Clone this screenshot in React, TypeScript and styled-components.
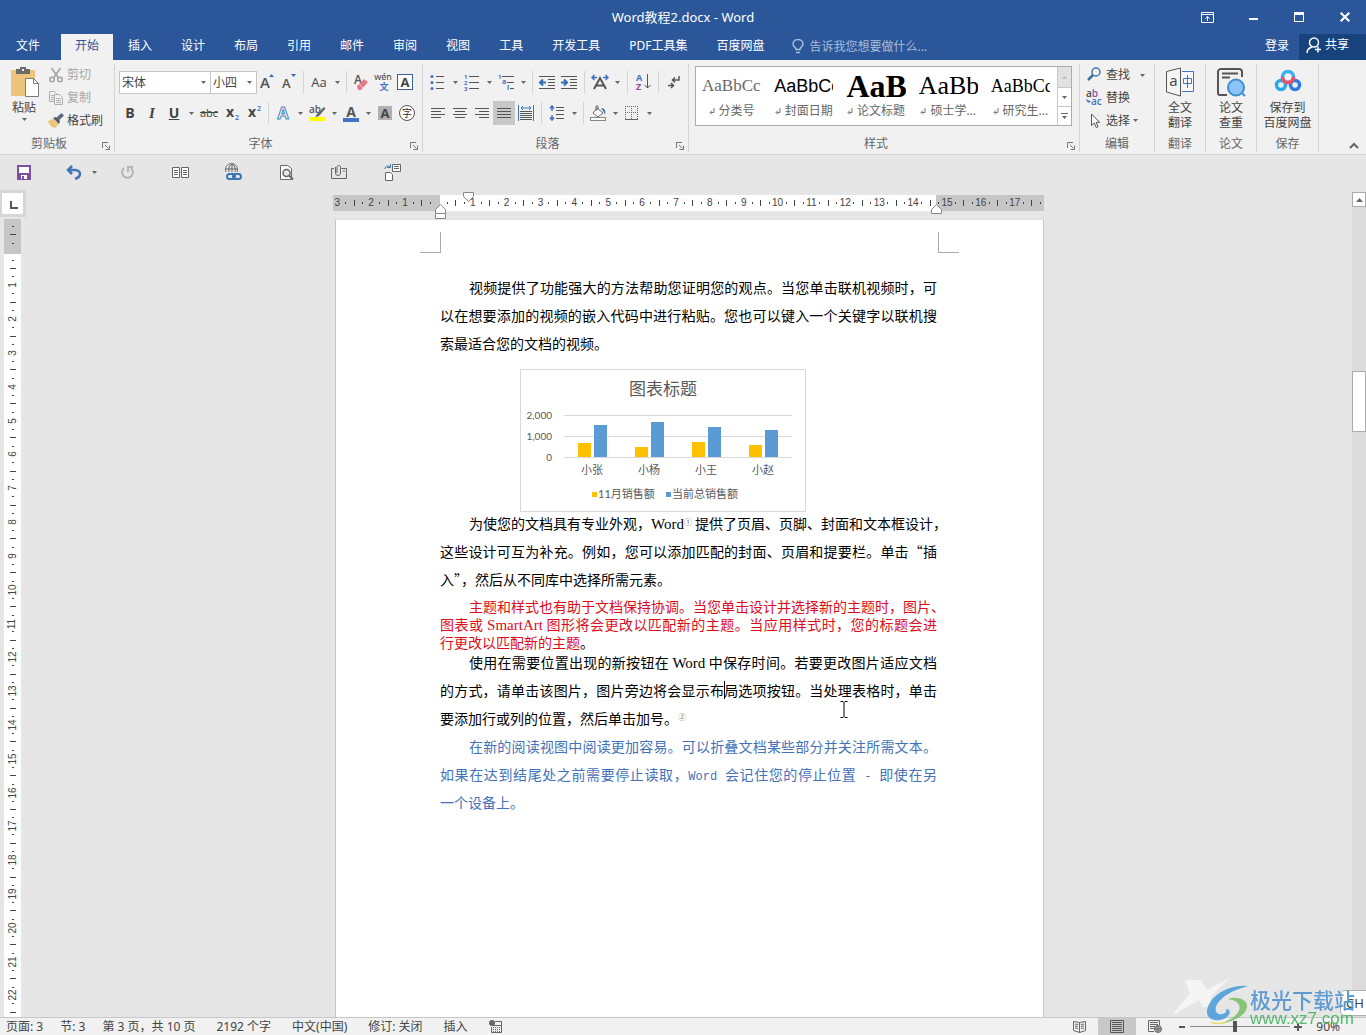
import React from "react";
import styled, { createGlobalStyle, css } from "styled-components";

const UI_FONT = `"Noto Sans", "Noto Sans CJK SC", sans-serif`;
const DOC_FONT = `"Noto Sans CJK SC", sans-serif`;
const LATIN_SERIF = `"Liberation Serif", "Noto Sans CJK SC", serif`;

const color = {
  brand: "#2b579a",
  brandDark: "#17427c",
  ribbon: "#f1f1f1",
  canvas: "#e6e6e6",
  line: "#d2d2d2",
  ink: "#444444",
  soft: "#666666",
  muted: "#a6a6a6",
  blue: "#2e6db4",
  blueInk: "#4472c4",
};

const GlobalStyle = createGlobalStyle`
  * { box-sizing: border-box; }
  html, body { margin: 0; height: 100%; overflow: hidden; }
  body { font: 12px/16px ${UI_FONT}; color: ${color.ink}; background: ${color.canvas}; }
  button, input, select { font: inherit; color: inherit; margin: 0; }
`;

const Window = styled.div`
  display: flex;
  flex-direction: column;
  height: 100vh;
  overflow: hidden;
  background: ${color.canvas};
`;

/* ---------- header ---------- */

const Header = styled.header`
  background: ${color.brand};
  color: #fff;
`;

const TitleRow = styled.div`
  display: grid;
  grid-template-columns: 1fr auto 1fr;
  align-items: center;
  height: 34px;
`;

const DocTitle = styled.h1`
  grid-column: 2;
  margin: 0;
  font-size: 13px;
  font-weight: 400;
  line-height: 34px;
`;

const WindowButtons = styled.div`
  display: flex;
  justify-content: flex-end;
  margin-right: -2px;
`;

const plainButton = css`
  display: flex;
  align-items: center;
  justify-content: center;
  padding: 0;
  border: 0;
  background: transparent;
  cursor: default;
`;

const WindowButton = styled.button`
  ${plainButton}
  width: 46px;
  height: 32px;
`;

const TabRow = styled.nav`
  display: flex;
  height: 26px;
  gap: 1px;
`;

const FileButton = styled.button`
  ${plainButton}
  justify-content: flex-start;
  width: 60px;
  padding-left: 16px;
  line-height: 24px;
  padding-bottom: 2px;
`;

const Tab = styled.button<{ $active?: boolean }>`
  ${plainButton}
  padding: 0 14px 2px;
  white-space: nowrap;
  background: ${(p) => (p.$active ? color.ribbon : "transparent")};
  color: ${(p) => (p.$active ? color.brand : "#fff")};
`;

const TellMe = styled.label`
  display: flex;
  align-items: center;
  gap: 5px;
  flex: 1;
  padding: 0 0 1px 13px;
`;

const TellMeInput = styled.input`
  width: 160px;
  border: 0;
  padding: 0;
  outline: 0;
  background: transparent;
  &::placeholder { color: #a9bddb; opacity: 1; }
`;

const SignIn = styled.button`
  ${plainButton}
  padding: 0 9px 2px;
`;

const Share = styled.button`
  ${plainButton}
  gap: 3px;
  width: 67px;
  padding: 0 10px 4px 0;
  background: ${color.brandDark};
`;

/* ---------- ribbon ---------- */

const Ribbon = styled.section`
  display: flex;
  height: 95px;
  padding: 4px 0 2px;
  border-bottom: 1px solid ${color.line};
  background: ${color.ribbon};
`;

const Group = styled.div<{ $width?: number }>`
  display: flex;
  flex-direction: column;
  flex: ${(p) => (p.$width ? `0 0 ${p.$width}px` : "1 1 0")};
  min-width: 0;
  border-right: 1px solid #d4d4d4;
`;

const GroupBody = styled.div<{ $pad?: string }>`
  display: flex;
  flex: 1;
  min-height: 0;
  padding: ${(p) => p.$pad ?? "0"};
`;

const GroupFooter = styled.div`
  display: flex;
  align-items: center;
  height: 16px;
  color: ${color.soft};
`;

const GroupLabel = styled.span`
  flex: 1;
  text-align: center;
`;

const Launcher = styled.button`
  ${plainButton}
  width: 16px;
  height: 16px;
  padding-top: 4px;
`;

const Rows = styled.div`
  display: flex;
  flex-direction: column;
  gap: 7px;
  padding-top: 6px;
`;

const ToolRow = styled.div`
  display: flex;
  align-items: center;
  height: 24px;
`;

const Tool = styled.button<{ $on?: boolean; $w?: number }>`
  ${plainButton}
  width: ${(p) => p.$w ?? 22}px;
  height: 24px;
  background: ${(p) => (p.$on ? "#c8c8c8" : "transparent")};
`;

const CaretButton = styled.button`
  ${plainButton}
  width: 12px;
  height: 22px;
`;

const Separator = styled.span<{ $wide?: boolean }>`
  width: 1px;
  height: 22px;
  margin: 0 ${(p) => (p.$wide ? 4 : 3)}px;
  background: #d4d4d4;
`;

const Combo = styled.div<{ $w: number }>`
  display: grid;
  align-items: center;
  width: ${(p) => p.$w}px;
  height: 23px;
  margin-right: -1px;
  border: 1px solid #c6c6c6;
  background: #fff;
  > * { grid-area: 1 / 1; }
  > svg { justify-self: end; margin-right: 4px; pointer-events: none; }
`;

const ComboSelect = styled.select`
  appearance: none;
  width: 100%;
  height: 21px;
  padding: 1px 0 0 2px;
  border: 0;
  outline: 0;
  background: transparent;
`;

const Glyph = styled.span<{ $bold?: boolean; $italic?: boolean; $under?: boolean; $strike?: boolean; $serif?: boolean; $size?: number }>`
  font-family: ${(p) => (p.$serif ? `"Liberation Serif", serif` : `"Open Sans", sans-serif`)};
  font-size: ${(p) => p.$size ?? 14}px;
  font-weight: ${(p) => (p.$bold ? 700 : 400)};
  font-style: ${(p) => (p.$italic ? "italic" : "normal")};
  text-decoration: ${(p) => (p.$under ? "underline" : p.$strike ? "line-through" : "none")};
  line-height: 16px;
`;

const Paste = styled.button`
  ${plainButton}
  flex-direction: column;
  justify-content: flex-start;
  width: 48px;
  padding-top: 3px;
  line-height: 20px;
`;

const CommandColumn = styled.div`
  display: flex;
  flex-direction: column;
`;

const CommandRow = styled.div`
  display: flex;
  align-items: center;
  gap: 6px;
`;

const Command = styled.button<{ $off?: boolean }>`
  ${plainButton}
  justify-content: flex-start;
  gap: 3px;
  height: 23px;
  padding-bottom: 2px;
  color: ${(p) => (p.$off ? color.muted : color.ink)};
`;

const BigCommand = styled.button`
  ${plainButton}
  flex: 1;
  flex-direction: column;
  justify-content: flex-start;
  gap: 3px;
  padding-top: 3px;
  line-height: 15px;
  white-space: pre-line;
`;

const Gallery = styled.div`
  display: flex;
  flex: 1;
  min-width: 0;
  height: 60px;
  border: 1px solid #ababab;
  background: #fff;
`;

const StyleItem = styled.button`
  ${plainButton}
  flex: 1 1 0;
  flex-direction: column;
  align-items: stretch;
  justify-content: flex-start;
  min-width: 0;
  padding: 0 7px 0 6px;
`;

const Sample = styled.span<{ $font: string; $size: number; $bold?: boolean; $light?: boolean }>`
  overflow: hidden;
  height: 36px;
  text-align: left;
  white-space: nowrap;
  font: ${(p) => (p.$bold ? 700 : 400)} ${(p) => p.$size}px/38px ${(p) => p.$font};
  color: ${(p) => (p.$light ? "#6a6a6a" : "#000")};
`;

const SampleName = styled.span`
  display: flex;
  align-items: center;
  justify-content: center;
  gap: 4px;
  line-height: 16px;
  white-space: nowrap;
  color: ${color.soft};
`;

const GalleryScroll = styled.div`
  display: grid;
  grid-template-rows: 21px 19px 1fr;
  width: 14px;
  border-left: 1px solid #c6c6c6;
`;

const GalleryButton = styled.button<{ $off?: boolean }>`
  ${plainButton}
  border-bottom: 1px solid #c6c6c6;
  background: ${(p) => (p.$off ? "#e1e1e1" : "#fff")};
  &:last-child { border-bottom: 0; }
`;

const Collapse = styled.button`
  ${plainButton}
  flex: 0 0 47px;
  align-items: flex-end;
  justify-content: flex-end;
  padding: 0 7px 3px 0;
`;

/* ---------- quick access ---------- */

const QuickBar = styled.div`
  display: flex;
  height: 35px;
`;

const QuickButton = styled.button<{ $w?: number }>`
  ${plainButton}
  width: ${(p) => p.$w ?? 53}px;
  height: 34px;
`;

const QuickSplit = styled.div`
  display: flex;
  align-items: center;
  width: 53px;
  padding-left: 12px;
`;

/* ---------- workspace ---------- */

const Workspace = styled.div`
  display: flex;
  flex: 1;
  min-height: 0;
`;

const LeftGutter = styled.div`
  display: flex;
  flex-direction: column;
  width: 27px;
`;

const TabStop = styled.button`
  ${plainButton}
  align-items: flex-end;
  width: 26px;
  height: 27px;
  padding: 0 0 5px 2px;
  border: 3px solid #d6d6d6;
  border-left-width: 2px;
  background: #fff;
`;

const VerticalRuler = styled.div`
  display: flex;
  flex-direction: column;
  flex: 1;
  width: 17px;
  min-height: 0;
  margin: 2px 0 0 4px;
  padding-top: 3px;
  background: linear-gradient(#c6c6c6 35px, #fff 35px);
`;

const HorizontalRuler = styled.div`
  position: relative;
  display: flex;
  height: 16px;
  margin: 5px 0 8px -2px;
  background: linear-gradient(90deg, #c6c6c6 107px, #fff 107px, #fff 603px, #c6c6c6 603px);
`;

const Mark = styled.span<{ $vertical?: boolean }>`
  display: flex;
  align-items: center;
  justify-content: center;
  flex: 1 1 0;
  min-width: 0;
  min-height: 0;
  font: 10px/10px "Liberation Sans", sans-serif;
  color: #444;
  > span {
    flex: none;
    transform: ${(p) => (p.$vertical ? "rotate(-90deg)" : "none")};
  }
`;

const Tick = styled.i<{ $long?: boolean; $vertical?: boolean }>`
  width: ${(p) => (p.$vertical ? (p.$long ? 6 : 2) : 1)}px;
  height: ${(p) => (p.$vertical ? 1 : p.$long ? 6 : 2)}px;
  background: #444;
`;

const IndentMarker = styled.svg<{ $x: number; $y: number }>`
  position: absolute;
  left: ${(p) => p.$x}px;
  top: ${(p) => p.$y}px;
  overflow: visible;
`;

const Canvas = styled.main`
  display: flex;
  flex: 1;
  justify-content: center;
  min-width: 0;
  min-height: 0;
  overflow: hidden;
`;

const Sheet = styled.div`
  display: flex;
  flex-direction: column;
  width: 709px;
`;

const Page = styled.article`
  position: relative;
  flex: 1;
  min-height: 0;
  padding: 12px 106px 0 104px;
  border: 1px solid #c6c6c6;
  border-width: 1px 1px 0;
  border-top-color: #e0e0e0;
  background: #fff;
  color: #000;
  font: 400 14px/28px ${DOC_FONT};
`;

const CropRow = styled.div`
  display: flex;
  justify-content: space-between;
  margin: 0 -22px 20px -20px;
`;

const Crop = styled.span<{ $side: "left" | "right" }>`
  width: 21px;
  height: 21px;
  border: 0 solid #ababab;
  border-bottom-width: 1px;
  ${(p) => (p.$side === "left" ? "border-right-width: 1px;" : "border-left-width: 1px;")}
`;

const Paragraph = styled.p<{ $tone?: string; $tight?: boolean }>`
  margin: ${(p) => (p.$tight ? "4px 0 -3px" : "0")};
  line-height: ${(p) => (p.$tight ? 18 : 28)}px;
  color: ${(p) => p.$tone ?? "#000"};
`;

const Line = styled.span<{ $indent?: boolean; $last?: boolean }>`
  display: block;
  padding-left: ${(p) => (p.$indent ? 29 : 0)}px;
  white-space: nowrap;
  text-align: justify;
  text-align-last: ${(p) => (p.$last ? "left" : "justify")};
`;

const Latin = styled.span<{ $mono?: boolean }>`
  font-family: ${(p) => (p.$mono ? `"Liberation Mono", monospace` : LATIN_SERIF)};
  font-size: ${(p) => (p.$mono ? 12 : 15)}px;
  line-height: 14px;
`;

const NoteMark = styled.a`
  font-size: 8px;
  line-height: 8px;
  vertical-align: 4px;
  text-decoration: none;
  color: #777;
`;

const Caret = styled.span`
  position: relative;
  &::after {
    content: "";
    position: absolute;
    left: 0;
    top: 1px;
    width: 1px;
    height: 18px;
    background: #000;
  }
`;

const Black = styled.span`
  color: #000;
`;

const PointerIcon = styled.svg`
  position: absolute;
  left: 504px;
  top: 481px;
`;

const ChartFrame = styled.figure`
  width: 286px;
  height: 143px;
  margin: 12px 0 -3px 80px;
  border: 1px solid #d9d9d9;
  line-height: 0;
`;

const ScrollBar = styled.div`
  display: flex;
  flex-direction: column;
  width: 14px;
  padding-top: 2px;
`;

const ScrollButton = styled.button`
  ${plainButton}
  height: 15px;
  border: 1px solid #ababab;
  background: #fff;
`;

const ScrollTrack = styled.div`
  flex: 1;
  padding-top: 164px;
  background: #dcdcdc;
`;

const ScrollThumb = styled.div`
  height: 61px;
  border: 1px solid #ababab;
  background: #fff;
`;

/* ---------- status bar ---------- */

const StatusBar = styled.footer`
  display: flex;
  align-items: center;
  height: 18px;
  padding-left: 6px;
  border-top: 1px solid #c6c6c6;
  background: ${color.ribbon};
  line-height: 17px;
  white-space: nowrap;
`;

const StatusItems = styled.div`
  display: flex;
  flex: 1;
  align-items: center;
  gap: 17px;
  > :nth-child(n + 4) { margin-left: 4px; }
`;

const ViewButton = styled.button<{ $on?: boolean }>`
  ${plainButton}
  width: 38px;
  height: 17px;
  background: ${(p) => (p.$on ? "#c8c8c8" : "transparent")};
`;

const ZoomButton = styled.button`
  ${plainButton}
  width: 16px;
  height: 17px;
`;

const ZoomSlider = styled.input`
  appearance: none;
  width: 100px;
  height: 12px;
  outline: 0;
  background: linear-gradient(#8a8a8a, #8a8a8a) center / 100% 1px no-repeat;
  &::-webkit-slider-thumb {
    appearance: none;
    width: 4px;
    height: 11px;
    background: #555;
  }
`;

const ZoomValue = styled.button`
  ${plainButton}
  width: 60px;
  padding: 0 26px 0 0;
  justify-content: flex-end;
`;

/* ---------- overlay ---------- */

const Overlay = styled.div`
  position: fixed;
  right: 0;
  bottom: 0;
  display: flex;
  align-items: flex-end;
  height: 60px;
  pointer-events: none;
`;

const ImeBadge = styled.div`
  position: fixed;
  right: -6px;
  bottom: 19px;
  width: 32px;
  height: 26px;
  padding-left: 5px;
  border: 1px solid #b0b0b0;
  border-radius: 5px;
  background: #fff;
  font-size: 13px;
  line-height: 25px;
`;

const SiteMark = styled.div`
  display: flex;
  flex-direction: column;
  margin: 0 11px 9px 0;
`;

const SiteName = styled.span`
  font: 500 21px/26px "Noto Sans CJK SC", sans-serif;
  color: #5f9bd3;
`;

const SiteUrl = styled.span`
  font: 400 17px/14px "Liberation Sans", sans-serif;
  color: #55b86d;
`;

/* ---------- icons ---------- */

const CaretIcon = ({ fill = "#666" }: { fill?: string }) => (
  <svg width="5" height="3" viewBox="0 0 5 3"><path d="M0 0h5L2.500 3z" fill={fill} /></svg>
);

const Drop = ({ label }: { label: string }) => (
  <CaretButton aria-label={label}><CaretIcon /></CaretButton>
);

type LineSpec = [number, number, number];
const LinesIcon = ({ rows, w = 16, h = 16, children }: { rows: LineSpec[]; w?: number; h?: number; children?: React.ReactNode }) => (
  <svg width={w} height={h} viewBox={`0 0 ${w} ${h}`} fill="none" overflow="visible">
    {rows.map(([x, y, len], i) => <rect key={i} x={x} y={y} width={len} height="1" fill="#555" />)}
    {children}
  </svg>
);

const LauncherIcon = () => (
  <svg width="8" height="8" viewBox="0 0 8 8" fill="none" stroke="#777">
    <path d="M.5 6V.5H6M3 3l3.500 3.500M7.500 3.500v4h-4" />
  </svg>
);

const PasteIcon = () => (
  <svg width="30" height="31" viewBox="0 0 30 31">
    <rect x="2" y="3" width="24" height="26" rx="1" fill="#ecc57c" />
    <path d="M7 2h4V0h6v2h4v5H7z" fill="#6b6b6b" />
    <rect x="13" y="2" width="2" height="2" fill="#f1f1f1" />
    <path d="M16.500 11.500h8l5 5v13h-13z" fill="#fff" stroke="#7b7b7b" />
    <path d="M24.500 11.500v5h5" fill="none" stroke="#7b7b7b" />
  </svg>
);

const CutIcon = () => (
  <svg width="16" height="16" viewBox="0 0 16 16" fill="none" stroke="#a3a3a3" strokeWidth="1.500">
    <path d="M3.500 1l7 10M12.500 1l-7 10" />
    <circle cx="4" cy="12.500" r="2.300" /><circle cx="12" cy="12.500" r="2.300" />
  </svg>
);

const CopyIcon = () => (
  <svg width="16" height="16" viewBox="0 0 16 16" fill="#f1f1f1" stroke="#b0b0b0">
    <path d="M1.500 1.500h5l2 2v8h-7zM3 5.500h4M3 7.500h4M3 9.500h3" />
    <path d="M6.500 4.500h5l3 3v7h-8zM8 8.500h5M8 10.500h5M8 12.500h5" />
  </svg>
);

const BrushIcon = () => (
  <svg width="16" height="16" viewBox="0 0 16 16">
    <path d="M0 8l5-2 6 5-4 4c-3 0-6-3-7-7z" fill="#ecc57c" />
    <path d="M5 5l3-1 4 4-1 3z" fill="#555" />
    <path d="M8.500 4.500L13.500 0 16 2.500l-5 5z" fill="#5a6b80" />
  </svg>
);

const GrowIcon = ({ up }: { up?: boolean }) => (
  <svg width="16" height="18" viewBox="0 0 16 18" overflow="visible">
    <text x="1" y="15" fontFamily="Open Sans" fontSize={up ? 15 : 13} fontWeight="600" fill="#555">A</text>
    <path d={up ? "M10 4l2.500-3L15 4z" : "M10 1h5l-2.500 3z"} fill={color.blue} />
  </svg>
);

const EraserIcon = () => (
  <svg width="16" height="17" viewBox="0 0 16 17" overflow="visible">
    <text x="1" y="10" fontFamily="Open Sans" fontSize="12" fontWeight="600" fill="#555">A</text>
    <path d="M4 12l7-7 4 3-7 8-3 0z" fill="#e8798a" />
    <path d="M6 10l4 4" stroke="#f7c3cb" />
  </svg>
);

const PinyinIcon = () => (
  <svg width="18" height="18" viewBox="0 0 18 18" overflow="visible">
    <text x="9" y="7" textAnchor="middle" fontFamily="Noto Sans" fontSize="9" fill="#444">wén</text>
    <text x="10" y="17" textAnchor="middle" fontFamily="Noto Sans CJK SC" fontSize="9" fontWeight="700" fill={color.blueInk}>文</text>
  </svg>
);

const BoxedA = () => (
  <svg width="16" height="16" viewBox="0 0 16 16" overflow="visible">
    <rect x=".5" y=".5" width="15" height="15" fill="#fff" stroke="#3c5f96" />
    <text x="8" y="13" textAnchor="middle" fontFamily="Open Sans" fontSize="13" fontWeight="700" fill="#444">A</text>
  </svg>
);

const ShadedA = () => (
  <svg width="14" height="14" viewBox="0 0 14 14" overflow="visible">
    <rect width="14" height="14" fill="#b0b0b0" />
    <text x="7" y="12" textAnchor="middle" fontFamily="Open Sans" fontSize="13" fontWeight="700" fill="#444">A</text>
  </svg>
);

const CircledChar = () => (
  <svg width="16" height="16" viewBox="0 0 16 16" overflow="visible">
    <circle cx="8" cy="8" r="7.500" fill="#fff" stroke="#555" />
    <text x="8" y="12" textAnchor="middle" fontFamily="Noto Sans CJK SC" fontSize="10" fill="#333">字</text>
  </svg>
);

const OutlineA = () => (
  <svg width="16" height="16" viewBox="0 0 16 16" overflow="visible">
    <text x="8" y="14" textAnchor="middle" fontFamily="Open Sans" fontSize="16" fontWeight="700" fill="#fff" stroke="#4a86c8">A</text>
  </svg>
);

const HighlightIcon = () => (
  <svg width="17" height="17" viewBox="0 0 17 17" overflow="visible">
    <text x="0" y="8" fontFamily="Open Sans" fontSize="10" fontWeight="600" fill="#555">ab</text>
    <path d="M15 2l1.500 1.500L10 11l-4 1.500L8 9z" fill="#666" />
    <rect y="12" width="16" height="4" fill="#ffff00" />
  </svg>
);

const FontColorIcon = () => (
  <svg width="16" height="17" viewBox="0 0 16 17" overflow="visible">
    <text x="8" y="12" textAnchor="middle" fontFamily="Open Sans" fontSize="14" fontWeight="700" fill="#555">A</text>
    <rect y="13" width="16" height="4" fill={color.blueInk} />
  </svg>
);

const ScriptIcon = ({ sup }: { sup?: boolean }) => (
  <svg width="15" height="16" viewBox="0 0 15 16" overflow="visible">
    <text x="1" y="12" fontFamily="Open Sans" fontSize="14" fontWeight="700" fill="#444">x</text>
    <text x="10" y={sup ? 6 : 15} fontFamily="Open Sans" fontSize="7" fontWeight="600" fill={color.blue}>2</text>
  </svg>
);

const BulletIcon = () => (
  <LinesIcon rows={[[6, 2, 8], [6, 8, 8], [6, 14, 8]]}>
    {[2, 8, 14].map((y) => <circle key={y} cx="2" cy={y + 0.5} r="1.500" fill={color.blueInk} />)}
  </LinesIcon>
);

const NumberIcon = () => (
  <LinesIcon rows={[[5, 2, 10], [5, 8, 10], [5, 14, 10]]}>
    {[1, 2, 3].map((n) => (
      <text key={n} x="0" y={n * 6 - 1} fontFamily="Open Sans" fontSize="6" fontWeight="700" fill={color.blueInk}>{n}</text>
    ))}
  </LinesIcon>
);

const MultiIcon = () => (
  <LinesIcon rows={[[4, 2, 12], [9, 8, 7], [12, 14, 4]]}>
    <text x="0" y="5" fontFamily="Open Sans" fontSize="6" fontWeight="700" fill={color.blueInk}>1</text>
    <text x="4" y="10" fontFamily="Open Sans" fontSize="7" fontWeight="700" fill={color.blueInk}>a</text>
    <text x="9" y="16" fontFamily="Open Sans" fontSize="7" fontWeight="700" fill={color.blueInk}>i</text>
  </LinesIcon>
);

const IndentIcon = ({ out }: { out?: boolean }) => (
  <LinesIcon h={14} rows={[[0, 1, 16], [9, 4, 7], [9, 7, 7], [9, 10, 7], [0, 13, 16]]}>
    <path d={out ? "M7 7.500H1M4 4.500l-3 3 3 3" : "M0 7.500h6M3 4.500l3 3-3 3"} stroke={color.blue} strokeWidth="2" />
  </LinesIcon>
);

const AsianLayoutIcon = () => (
  <svg width="18" height="16" viewBox="0 0 18 16" fill="none">
    <path d="M6 3.500H1M3.500 1L1 3.500 3.500 6M12 3.500h5M14.500 1L17 3.500 14.500 6" stroke={color.blueInk} strokeWidth="1.500" />
    <path d="M3 15L9 4l6 11M5 11.500h8" stroke="#555" strokeWidth="2" />
  </svg>
);

const SortIcon = () => (
  <svg width="15" height="18" viewBox="0 0 15 18" fill="none" overflow="visible">
    <text x="0" y="8" fontFamily="Open Sans" fontSize="9" fontWeight="700" fill={color.blueInk}>A</text>
    <text x="0" y="17" fontFamily="Open Sans" fontSize="9" fontWeight="700" fill="#8c4fa8">Z</text>
    <path d="M11.500 1v14M8.500 12l3 3 3-3" stroke="#555" />
  </svg>
);

const ParagraphMarks = () => (
  <svg width="12" height="14" viewBox="0 0 12 14" fill="none" stroke="#555" strokeWidth="1.500">
    <path d="M11 1v4H5M7 2.500L4.500 5 7 7.500M0 10.500h5M3 8l2.500 2.500L3 13" />
  </svg>
);

const DistributeIcon = () => (
  <LinesIcon rows={[[2, 6, 12], [2, 8, 12], [2, 10, 12], [2, 12, 12], [2, 14, 12]]}>
    <path d="M.5 0v16M15.500 0v16M3 3h10M5 1L3 3l2 2M11 1l2 2-2 2" stroke={color.blueInk} />
  </LinesIcon>
);

const SpacingIcon = () => (
  <LinesIcon rows={[[7, 2, 8], [7, 5, 8], [7, 9, 8], [7, 13, 8]]}>
    <path d="M3 1v5M1 3.500L3 1l2 2.500M3 15v-5M1 12.500L3 15l2-2.500" stroke={color.blueInk} strokeWidth="1.500" />
  </LinesIcon>
);

const BucketIcon = () => (
  <svg width="17" height="16" viewBox="0 0 17 16" fill="none">
    <path d="M7 3l6 5-5 4-5-4z" fill="#fff" stroke="#666" />
    <path d="M6 6V1h2v4" stroke="#666" />
    <path d="M11 3c4 0 5 3 4 7-1-3-2-4-4-7z" fill="#3f79a8" />
    <rect x=".5" y="12.500" width="15" height="3" fill="#fff" stroke="#888" />
  </svg>
);

const BordersIcon = () => (
  <svg width="14" height="14" viewBox="0 0 14 14" fill="none" stroke="#666">
    <path d="M.5 0v13M6.500 0v13M12.500 0v13M0 .5h13M0 6.500h13" strokeDasharray="1 1" />
    <path d="M0 13.500h13" />
  </svg>
);

const ReturnMark = () => (
  <svg width="6" height="7" viewBox="0 0 6 7" fill="none" stroke="#777"><path d="M5 0v4.500H1.500M3 2.500l-2 2 2 2" /></svg>
);

const FindIcon = () => (
  <svg width="17" height="15" viewBox="-1 0 17 15" fill="none">
    <circle cx="9" cy="5" r="4" fill="#fff" stroke="#3f6ea8" strokeWidth="1.500" />
    <path d="M6 8l-5 5" stroke="#3f6ea8" strokeWidth="2.500" />
  </svg>
);

const ReplaceIcon = () => (
  <svg width="17" height="17" viewBox="0 0 17 17" overflow="visible">
    <text x="0" y="8" fontFamily="Open Sans" fontSize="10" fontWeight="600" fill="#444">a<tspan fill="#8c4fa8">b</tspan></text>
    <text x="5" y="16" fontFamily="Open Sans" fontSize="10" fontWeight="600" fill={color.blueInk}>ac</text>
    <path d="M1 10v2.500h3M2.500 11L4 12.500 2.500 14" fill="none" stroke={color.blueInk} />
  </svg>
);

const ArrowIcon = () => (
  <svg width="17" height="16" viewBox="-1 0 17 16">
    <path d="M4.500 1v11.500l2.800-2.500 2 4.500 1.800-.8-2-4.400h3.500z" fill="#fff" stroke="#555" />
  </svg>
);

const TranslateIcon = () => (
  <svg width="30" height="30" viewBox="0 0 30 30" fill="none">
    <path d="M17 4.500h11.500v20H17" fill="#f6f8fc" stroke={color.blueInk} />
    <path d="M1.500 4.500L15.500 1v28l-14-4z" fill="#f5f5f5" stroke="#555" />
    <text x="8.500" y="19" textAnchor="middle" fontFamily="Open Sans" fontSize="15" fill="#444">a</text>
    <path d="M18.500 11.500h8v5h-8zM22.500 8v13" stroke={color.blueInk} />
  </svg>
);

const PaperCheckIcon = () => (
  <svg width="30" height="30" viewBox="0 0 30 30" fill="none" stroke="#555" strokeWidth="2">
    <path d="M11 28H4a2 2 0 0 1-2-2V4a3 3 0 0 1 3-2h18a3 3 0 0 1 3 3v5M6 6.500h16M6 10.500h8" />
    <circle cx="20" cy="20.500" r="8" fill="#8cc4f7" stroke="#3d8fd0" />
    <path d="M26 26l3 3" stroke="#3d8fd0" />
  </svg>
);

const CloudDiskIcon = () => (
  <svg width="28" height="30" viewBox="0 0 28 30" fill="none">
    <circle cx="7" cy="18" r="4.500" stroke="#27a9e8" strokeWidth="3.500" />
    <circle cx="21" cy="18" r="4.500" stroke="#2f7de0" strokeWidth="3.500" />
    <circle cx="14" cy="10" r="5.500" stroke="#3bb0ee" strokeWidth="3.500" />
    <path d="M8.500 10a5.500 5.500 0 0 0 11 0" stroke="#ef4f6b" strokeWidth="3.500" />
  </svg>
);

const SaveIcon = () => (
  <svg width="14" height="15" viewBox="0 0 14 15" fill="none">
    <path d="M1 1h12v13H1z" fill="#fff" stroke="#7b50a0" strokeWidth="2" />
    <path d="M1 8h12v6H1z" fill="#7b50a0" /><path d="M4 10h6v4H4z" fill="#fff" /><path d="M5 11h2v3H5z" fill="#7b50a0" />
  </svg>
);

const UndoIcon = () => (
  <svg width="16" height="15" viewBox="0 0 16 15" fill="none" stroke="#3f74b5" strokeWidth="2.500">
    <path d="M6 1L2 5l4 4M2 5h7c3 0 5 2 5 4s-2 4.500-5 4.500" />
  </svg>
);

const RedoIcon = () => (
  <svg width="15" height="15" viewBox="0 0 15 15" fill="none" stroke="#b5b5b5" strokeWidth="2">
    <path d="M4 3a5.500 5.500 0 1 0 7 0M8 7V2h5" />
  </svg>
);

const ReadIcon = () => (
  <svg width="17" height="13" viewBox="0 0 17 13" fill="#fff" stroke="#666">
    <path d="M.5 1.500h7v10h-7zM9.500 1.500h7v10h-7z" />
    <path d="M2 4.500h4M2 6.500h4M2 8.500h4M11 4.500h4M11 6.500h4M11 8.500h4" />
  </svg>
);

const LinkGlobeIcon = () => (
  <svg width="17" height="18" viewBox="0 0 17 18" fill="none" stroke="#666">
    <path d="M1 9a6 6 0 1 1 11 0M7 1v8M1 6h12M4 9c-1-4 1-7 3-8 2 1 4 4 3 8" />
    <rect x="2" y="11" width="8" height="5" rx="2.500" stroke="#3f74b5" strokeWidth="2" />
    <rect x="8" y="11" width="8" height="5" rx="2.500" stroke="#3f74b5" strokeWidth="2" />
  </svg>
);

const PreviewIcon = () => (
  <svg width="15" height="17" viewBox="0 0 15 17" fill="none" stroke="#666">
    <path d="M1.500 1.500h7l4 3v11h-11z" fill="#fff" />
    <circle cx="7.500" cy="9" r="3.500" fill="#e6e6e6" strokeWidth="1.500" /><path d="M10 11.500l4 4" strokeWidth="2" />
  </svg>
);

const AttachIcon = () => (
  <svg width="17" height="16" viewBox="0 0 17 16" fill="none" stroke="#666">
    <path d="M3 4.500H.5v10h15v-10h-5M12 7h2" />
    <path d="M4.500 3v6a2.500 2.500 0 0 0 5 0V2.500a2 2 0 0 0-3.500 0V9" />
  </svg>
);

const MergeIcon = () => (
  <svg width="17" height="17" viewBox="0 0 17 17" fill="none" stroke="#666">
    <path d="M8.500.5h8v7h-8zM10 2.500h5M10 4.500h5" fill="#fff" />
    <path d="M1.500 8.500h5l2 2v6h-7z" fill="#fff" />
    <path d="M1 5c0-3 3-4 5-2M6.500 0v3.500H3" stroke="#3f74b5" />
  </svg>
);

const IndentShape = ({ x, y, kind, label }: { x: number; y: number; kind: "first" | "left" | "right"; label: string }) => {
  const shapes = {
    first: "M.5.5h10v4l-5 5-5-5z",
    left: "M.5 9.500v-4l5-5 5 5v9H.5zM.5 9.500h10",
    right: "M.5 9.500v-4l5-5 5 5v4z",
  };
  return (
    <IndentMarker $x={x} $y={y} width="11" height="15" role="img" aria-label={label}>
      <path d={shapes[kind]} fill="#fff" stroke="#888" />
    </IndentMarker>
  );
};

/* ---------- rulers ---------- */

const Marks = ({ from, count, vertical }: { from: number; count: number; vertical?: boolean }) => (
  <>
    {Array.from({ length: count }, (_, i) => {
      const quarter = from + i;
      const part = ((quarter % 4) + 4) % 4;
      const n = Math.abs(quarter / 4);
      return (
        <Mark key={i} $vertical={vertical}>
          {part === 0 ? (n > 0 && <span>{n}</span>) : <Tick $vertical={vertical} $long={part === 2} />}
        </Mark>
      );
    })}
  </>
);

/* ---------- chart ---------- */

const sales = [
  { name: "小张", month: 680, total: 1500 },
  { name: "小杨", month: 480, total: 1680 },
  { name: "小王", month: 730, total: 1440 },
  { name: "小赵", month: 580, total: 1300 },
];

const SalesChart = () => {
  const base = 87;
  const scale = (v: number) => Math.round((v * 42) / 2000);
  return (
    <ChartFrame>
      <svg width="284" height="141" viewBox="0 0 284 141" fontFamily="Lato, 'Noto Sans CJK SC', sans-serif" fill="#595959">
        <text x="142" y="25" textAnchor="middle" fontSize="17">图表标题</text>
        {[2000, 1000, 0].map((v) => (
          <g key={v}>
            <rect x="43" y={base - scale(v)} width="228" height="1" fill="#d9d9d9" />
            <text x="31" y={base - scale(v) + 4} textAnchor="end" fontSize="10">{v.toLocaleString("en-US")}</text>
          </g>
        ))}
        {sales.map((s, i) => {
          const x = 57 + i * 57;
          return (
            <g key={s.name}>
              <rect x={x} y={base - scale(s.month)} width="13" height={scale(s.month)} fill="#ffc000" />
              <rect x={x + 16} y={base - scale(s.total)} width="13" height={scale(s.total)} fill="#5b9bd5" />
              <text x={x + 14} y="104" textAnchor="middle" fontSize="11">{s.name}</text>
            </g>
          );
        })}
        <rect x="71" y="122" width="5" height="5" fill="#ffc000" />
        <text x="77" y="128" fontSize="11">11月销售额</text>
        <rect x="145" y="122" width="5" height="5" fill="#5b9bd5" />
        <text x="151" y="128" fontSize="11">当前总销售额</text>
      </svg>
    </ChartFrame>
  );
};

/* ---------- data ---------- */

const tabs = ["开始", "插入", "设计", "布局", "引用", "邮件", "审阅", "视图", "工具", "开发工具", "PDF工具集", "百度网盘"];

const styleItems = [
  { name: "分类号", font: LATIN_SERIF, size: 17, light: true },
  { name: "封面日期", font: `"Liberation Sans", sans-serif`, size: 18 },
  { name: "论文标题", font: LATIN_SERIF, size: 32, bold: true },
  { name: "硕士学...", font: LATIN_SERIF, size: 26 },
  { name: "研究生...", font: LATIN_SERIF, size: 18 },
];

const Footer = ({ name, launcher }: { name: string; launcher?: boolean }) => (
  <GroupFooter>
    <GroupLabel>{name}</GroupLabel>
    {launcher && <Launcher aria-label={`${name}设置`}><LauncherIcon /></Launcher>}
  </GroupFooter>
);

export default function App() {
  return (
    <Window lang="zh-CN">
      <GlobalStyle />
      <Header>
        <TitleRow>
          <DocTitle>Word教程2.docx - Word</DocTitle>
          <WindowButtons>
            <WindowButton aria-label="功能区显示选项">
              <svg width="13" height="11" viewBox="0 0 13 11" fill="none" stroke="#fff"><path d="M.5.5h12v10H.5zM0 2.500h13M6.500 9V4.500M4.500 6.500l2-2 2 2" /></svg>
            </WindowButton>
            <WindowButton aria-label="最小化">
              <svg width="9" height="11" viewBox="0 0 9 11"><path d="M0 6h9v2H0z" fill="#fff" /></svg>
            </WindowButton>
            <WindowButton aria-label="最大化">
              <svg width="10" height="10" viewBox="0 0 10 10"><path d="M0 0h10v10H0zM1 3v6h8V3z" fill="#fff" fillRule="evenodd" /></svg>
            </WindowButton>
            <WindowButton aria-label="关闭">
              <svg width="10" height="10" viewBox="0 0 10 10" stroke="#fff" strokeWidth="2"><path d="M.7.7l8.600 8.600M9.300.7L.7 9.300" /></svg>
            </WindowButton>
          </WindowButtons>
        </TitleRow>
        <TabRow>
          <FileButton>文件</FileButton>
          {tabs.map((t, i) => <Tab key={t} $active={i === 0}>{t}</Tab>)}
          <TellMe>
            <svg width="12" height="15" viewBox="0 0 12 15" fill="none" stroke="#a9bddb" strokeWidth="1.500">
              <path d="M4 10.500c0-2-3-3-3-5.500a5 4.500 0 0 1 10 0c0 2.500-3 3.500-3 5.500zM4 13.500h4" />
            </svg>
            <TellMeInput aria-label="告诉我您想要做什么" placeholder="告诉我您想要做什么..." />
          </TellMe>
          <SignIn>登录</SignIn>
          <Share>
            <svg width="16" height="17" viewBox="0 0 16 17" fill="none" stroke="#fff" strokeWidth="1.500">
              <circle cx="8" cy="5.500" r="4.500" /><path d="M1 16c0-3.500 2-5 5-6M9 12.500h6M12 9.500v6" />
            </svg>
            共享
          </Share>
        </TabRow>
      </Header>

      <Ribbon>
        <Group $width={115}>
          <GroupBody>
            <Paste><PasteIcon />粘贴<CaretIcon /></Paste>
            <CommandColumn>
              <Command $off><CutIcon />剪切</Command>
              <Command $off><CopyIcon />复制</Command>
              <Command><BrushIcon />格式刷</Command>
            </CommandColumn>
          </GroupBody>
          <Footer name="剪贴板" launcher />
        </Group>

        <Group $width={308}>
          <GroupBody $pad="0 0 0 4px">
            <Rows>
              <ToolRow>
                <Combo $w={92}><ComboSelect aria-label="字体"><option>宋体</option></ComboSelect><CaretIcon /></Combo>
                <Combo $w={47}><ComboSelect aria-label="字号"><option>小四</option></ComboSelect><CaretIcon /></Combo>
                <Tool aria-label="增大字号"><GrowIcon up /></Tool>
                <Tool aria-label="减小字号"><GrowIcon /></Tool>
                <Separator />
                <Tool $w={24} aria-label="更改大小写"><Glyph $size={13}>Aa</Glyph></Tool>
                <Drop label="大小写选项" />
                <Separator />
                <Tool aria-label="清除格式"><EraserIcon /></Tool>
                <Tool aria-label="拼音指南"><PinyinIcon /></Tool>
                <Tool aria-label="字符边框"><BoxedA /></Tool>
              </ToolRow>
              <ToolRow>
                <Tool aria-label="加粗"><Glyph $bold>B</Glyph></Tool>
                <Tool aria-label="倾斜"><Glyph $italic $bold $serif $size={15}>I</Glyph></Tool>
                <Tool aria-label="下划线"><Glyph $under $bold>U</Glyph></Tool>
                <Drop label="下划线选项" />
                <Tool $w={24} aria-label="删除线"><Glyph $strike $size={11}>abc</Glyph></Tool>
                <Tool aria-label="下标"><ScriptIcon /></Tool>
                <Tool aria-label="上标"><ScriptIcon sup /></Tool>
                <Separator />
                <Tool aria-label="文本效果"><OutlineA /></Tool>
                <Drop label="文本效果选项" />
                <Tool aria-label="突出显示"><HighlightIcon /></Tool>
                <Drop label="突出显示颜色" />
                <Tool aria-label="字体颜色"><FontColorIcon /></Tool>
                <Drop label="字体颜色选项" />
                <Tool aria-label="字符底纹"><ShadedA /></Tool>
                <Tool aria-label="带圈字符"><CircledChar /></Tool>
              </ToolRow>
            </Rows>
          </GroupBody>
          <Footer name="字体" launcher />
        </Group>

        <Group $width={266}>
          <GroupBody $pad="0 0 0 4px">
            <Rows>
              <ToolRow>
                <Tool aria-label="项目符号"><BulletIcon /></Tool>
                <Drop label="项目符号选项" />
                <Tool aria-label="编号"><NumberIcon /></Tool>
                <Drop label="编号选项" />
                <Tool aria-label="多级列表"><MultiIcon /></Tool>
                <Drop label="多级列表选项" />
                <Separator />
                <Tool aria-label="减少缩进量"><IndentIcon out /></Tool>
                <Tool aria-label="增加缩进量"><IndentIcon /></Tool>
                <Separator $wide />
                <Tool aria-label="中文版式"><AsianLayoutIcon /></Tool>
                <Drop label="中文版式选项" />
                <Separator $wide />
                <Tool aria-label="排序"><SortIcon /></Tool>
                <Separator $wide />
                <Tool aria-label="显示编辑标记"><ParagraphMarks /></Tool>
              </ToolRow>
              <ToolRow>
                <Tool aria-label="左对齐"><LinesIcon w={14} h={12} rows={[[0, 1, 14], [0, 4, 10], [0, 7, 14], [0, 10, 10]]} /></Tool>
                <Tool aria-label="居中"><LinesIcon w={14} h={12} rows={[[0, 1, 14], [2, 4, 10], [0, 7, 14], [2, 10, 10]]} /></Tool>
                <Tool aria-label="右对齐"><LinesIcon w={14} h={12} rows={[[0, 1, 14], [4, 4, 10], [0, 7, 14], [4, 10, 10]]} /></Tool>
                <Tool $on aria-label="两端对齐"><LinesIcon w={14} h={12} rows={[[0, 1, 14], [0, 4, 14], [0, 7, 14], [0, 10, 14]]} /></Tool>
                <Tool aria-label="分散对齐"><DistributeIcon /></Tool>
                <Separator $wide />
                <Tool aria-label="行距"><SpacingIcon /></Tool>
                <Drop label="行距选项" />
                <Separator />
                <Tool aria-label="底纹"><BucketIcon /></Tool>
                <Drop label="底纹选项" />
                <Tool aria-label="边框"><BordersIcon /></Tool>
                <Drop label="边框选项" />
              </ToolRow>
            </Rows>
          </GroupBody>
          <Footer name="段落" launcher />
        </Group>

        <Group>
          <GroupBody $pad="2px 7px 0 6px">
            <Gallery>
              {styleItems.map((s) => (
                <StyleItem key={s.name}>
                  <Sample $font={s.font} $size={s.size} $bold={s.bold} $light={s.light}>AaBbCc</Sample>
                  <SampleName><ReturnMark />{s.name}</SampleName>
                </StyleItem>
              ))}
              <GalleryScroll>
                <GalleryButton $off aria-label="上一行">
                  <svg width="5" height="3" viewBox="0 0 5 3"><path d="M0 3h5L2.500 0z" fill="#bbb" /></svg>
                </GalleryButton>
                <GalleryButton aria-label="下一行"><CaretIcon /></GalleryButton>
                <GalleryButton aria-label="其他样式">
                  <svg width="7" height="6" viewBox="0 0 7 6"><path d="M0 0h7v1H0zM1 3h5L3.500 6z" fill="#666" /></svg>
                </GalleryButton>
              </GalleryScroll>
            </Gallery>
          </GroupBody>
          <Footer name="样式" launcher />
        </Group>

        <Group $width={75}>
          <GroupBody $pad="0 0 0 6px">
            <CommandColumn>
              <CommandRow>
                <Command><FindIcon />查找</Command>
                <Drop label="查找选项" />
              </CommandRow>
              <Command><ReplaceIcon />替换</Command>
              <Command><ArrowIcon />选择<CaretIcon /></Command>
            </CommandColumn>
          </GroupBody>
          <Footer name="编辑" />
        </Group>
        <Group $width={51}>
          <GroupBody><BigCommand><TranslateIcon />{"全文\n翻译"}</BigCommand></GroupBody>
          <Footer name="翻译" />
        </Group>
        <Group $width={51}>
          <GroupBody><BigCommand><PaperCheckIcon />{"论文\n查重"}</BigCommand></GroupBody>
          <Footer name="论文" />
        </Group>
        <Group $width={62}>
          <GroupBody><BigCommand><CloudDiskIcon />{"保存到\n百度网盘"}</BigCommand></GroupBody>
          <Footer name="保存" />
        </Group>
        <Collapse aria-label="折叠功能区">
          <svg width="10" height="7" viewBox="0 0 10 7" fill="none" stroke="#666" strokeWidth="2"><path d="M1 6l4-4 4 4" /></svg>
        </Collapse>
      </Ribbon>

      <QuickBar>
        <QuickButton $w={48} aria-label="保存"><SaveIcon /></QuickButton>
        <QuickSplit>
          <QuickButton $w={28} aria-label="撤消"><UndoIcon /></QuickButton>
          <Drop label="撤消列表" />
        </QuickSplit>
        <QuickButton aria-label="重复"><RedoIcon /></QuickButton>
        <QuickButton aria-label="阅读视图"><ReadIcon /></QuickButton>
        <QuickButton aria-label="超链接"><LinkGlobeIcon /></QuickButton>
        <QuickButton aria-label="打印预览"><PreviewIcon /></QuickButton>
        <QuickButton aria-label="附件"><AttachIcon /></QuickButton>
        <QuickButton aria-label="切换窗口"><MergeIcon /></QuickButton>
      </QuickBar>

      <Workspace>
        <LeftGutter>
          <TabStop aria-label="制表符">
            <svg width="8" height="8" viewBox="0 0 8 8"><path d="M0 0h2v6h6v2H0z" fill="#555" /></svg>
          </TabStop>
          <VerticalRuler><Marks from={-3} count={94} vertical /></VerticalRuler>
        </LeftGutter>
        <Canvas>
          <Sheet>
            <HorizontalRuler>
              <Marks from={-12} count={84} />
              <IndentShape x={130} y={-3} kind="first" label="首行缩进" />
              <IndentShape x={102} y={9} kind="left" label="左缩进" />
              <IndentShape x={598} y={9} kind="right" label="右缩进" />
            </HorizontalRuler>
            <Page>
              <CropRow><Crop $side="left" /><Crop $side="right" /></CropRow>
              <Paragraph>
                <Line $indent>视频提供了功能强大的方法帮助您证明您的观点。当您单击联机视频时，可</Line>
                <Line>以在想要添加的视频的嵌入代码中进行粘贴。您也可以键入一个关键字以联机搜</Line>
                <Line $last>索最适合您的文档的视频。</Line>
              </Paragraph>
              <SalesChart />
              <Paragraph>
                <Line $indent>为使您的文档具有专业外观，<Latin>Word</Latin><NoteMark href="#note-1">①</NoteMark> 提供了页眉、页脚、封面和文本框设计，</Line>
                <Line>这些设计可互为补充。例如，您可以添加匹配的封面、页眉和提要栏。单击“插</Line>
                <Line $last>入”，然后从不同库中选择所需元素。</Line>
              </Paragraph>
              <Paragraph $tight $tone="#e00b18">
                <Line $indent>主题和样式也有助于文档保持协调。当您单击设计并选择新的主题时，图片、</Line>
                <Line>图表或 <Latin>SmartArt</Latin> 图形将会更改以匹配新的主题。当应用样式时，您的标题会进</Line>
                <Line $last>行更改以匹配新的主题<Black>。</Black></Line>
              </Paragraph>
              <Paragraph>
                <Line $indent>使用在需要位置出现的新按钮在 <Latin>Word</Latin> 中保存时间。若要更改图片适应文档</Line>
                <Line>的方式，请单击该图片，图片旁边将会显示布<Caret />局选项按钮。当处理表格时，单击</Line>
                <Line $last>要添加行或列的位置，然后单击加号。<NoteMark href="#note-2">②</NoteMark></Line>
              </Paragraph>
              <Paragraph $tone="#4472b8">
                <Line $indent>在新的阅读视图中阅读更加容易。可以折叠文档某些部分并关注所需文本。</Line>
                <Line>如果在达到结尾处之前需要停止读取，<Latin $mono>Word </Latin>会记住您的停止位置<Latin $mono> - </Latin>即使在另</Line>
                <Line $last>一个设备上。</Line>
              </Paragraph>
              <PointerIcon width="8" height="17" viewBox="0 0 8 17" fill="none" stroke="#000">
                <path d="M.5.5h2.500l1 1 1-1h2.500M4 1.500v14M.5 16.500h2.500l1-1 1 1h2.500" />
              </PointerIcon>
            </Page>
          </Sheet>
        </Canvas>
        <ScrollBar>
          <ScrollButton aria-label="向上滚动">
            <svg width="7" height="4" viewBox="0 0 7 4"><path d="M0 4h7L3.500 0z" fill="#666" /></svg>
          </ScrollButton>
          <ScrollTrack><ScrollThumb /></ScrollTrack>
        </ScrollBar>
      </Workspace>

      <StatusBar>
        <StatusItems>
          <span>页面: 3</span>
          <span>节: 3</span>
          <span>第 3 页，共 10 页</span>
          <span>2192 个字</span>
          <span>中文(中国)</span>
          <span>修订: 关闭</span>
          <span>插入</span>
          <svg width="13" height="13" viewBox="0 0 13 13" fill="none" stroke="#666">
            <path d="M6 1.500h6.500v11h-10V7M4 5.500h8" />
            <path d="M4 7.500h8M4 9.500h8M4 11.500h8" strokeDasharray="1 1" />
            <circle cx="3" cy="3" r="3" fill="#666" stroke="none" />
          </svg>
        </StatusItems>
        <ViewButton aria-label="阅读视图">
          <svg width="13" height="12" viewBox="0 0 13 12" fill="none" stroke="#666">
            <path d="M6.500 1.500v10M6.500 1.500L.5.5v9l6 2 6-2v-9zM2 3l3 .5M2 5l3 .5M2 7l3 .5M11 3l-3 .5M11 5l-3 .5M11 7l-3 .5" />
          </svg>
        </ViewButton>
        <ViewButton $on aria-label="页面视图">
          <svg width="14" height="13" viewBox="0 0 14 13" fill="none" stroke="#555">
            <path d="M.5.5h13v12H.5zM2 2.500h10M2 4.500h10M2 6.500h10M2 8.500h10M2 10.500h10" />
          </svg>
        </ViewButton>
        <ViewButton aria-label="Web 版式视图">
          <svg width="14" height="13" viewBox="0 0 14 13" fill="none" stroke="#666">
            <path d="M6 11.500H.5V.5h11V5M2 2.500h8M2 4.500h8M2 6.500h5M2 8.500h4" /><circle cx="10" cy="9" r="3.500" fill="#aaa" /><path d="M7 9h6M10 6v6" />
          </svg>
        </ViewButton>
        <ZoomButton aria-label="缩小">
          <svg width="7" height="8" viewBox="0 0 7 8"><path d="M0 3h6v2H0z" fill="#555" /></svg>
        </ZoomButton>
        <ZoomSlider type="range" min="10" max="190" defaultValue="90" aria-label="显示比例" />
        <ZoomButton aria-label="放大">
          <svg width="8" height="8" viewBox="0 0 8 8"><path d="M0 3h3V0h2v3h3v2H5v3H3V5H0z" fill="#555" /></svg>
        </ZoomButton>
        <ZoomValue>90%</ZoomValue>
      </StatusBar>

      <ImeBadge>CH</ImeBadge>
      <Overlay>
        <svg width="76" height="60" viewBox="0 0 76 60" fill="none">
          <path d="M11 5h16l6 10L56 3 36 22l5 10H29l-4-7Q8 34-4 43q10-14 20-24z" fill="#fff" opacity=".6" />
          <path d="M74 11C54 9 33 22 33 38c1 8 14 10 21 3 3-4 2-7-2-7 2 4-5 7-9 4-5-6 4-20 31-27z" fill="#4c9fd8" opacity=".9" />
          <path d="M54 24c8-3 18 0 19 6 1 10-14 17-25 18 12-4 20-12 17-18-2-4-6-5-11-6z" fill="#7cc06a" opacity=".9" />
          <path d="M35 47c5 3 14 3 20 0-6 1-14 1-20 0z" fill="#e6d84c" opacity=".9" />
        </svg>
        <SiteMark><SiteName>极光下载站</SiteName><SiteUrl>www.xz7.com</SiteUrl></SiteMark>
      </Overlay>
    </Window>
  );
}
